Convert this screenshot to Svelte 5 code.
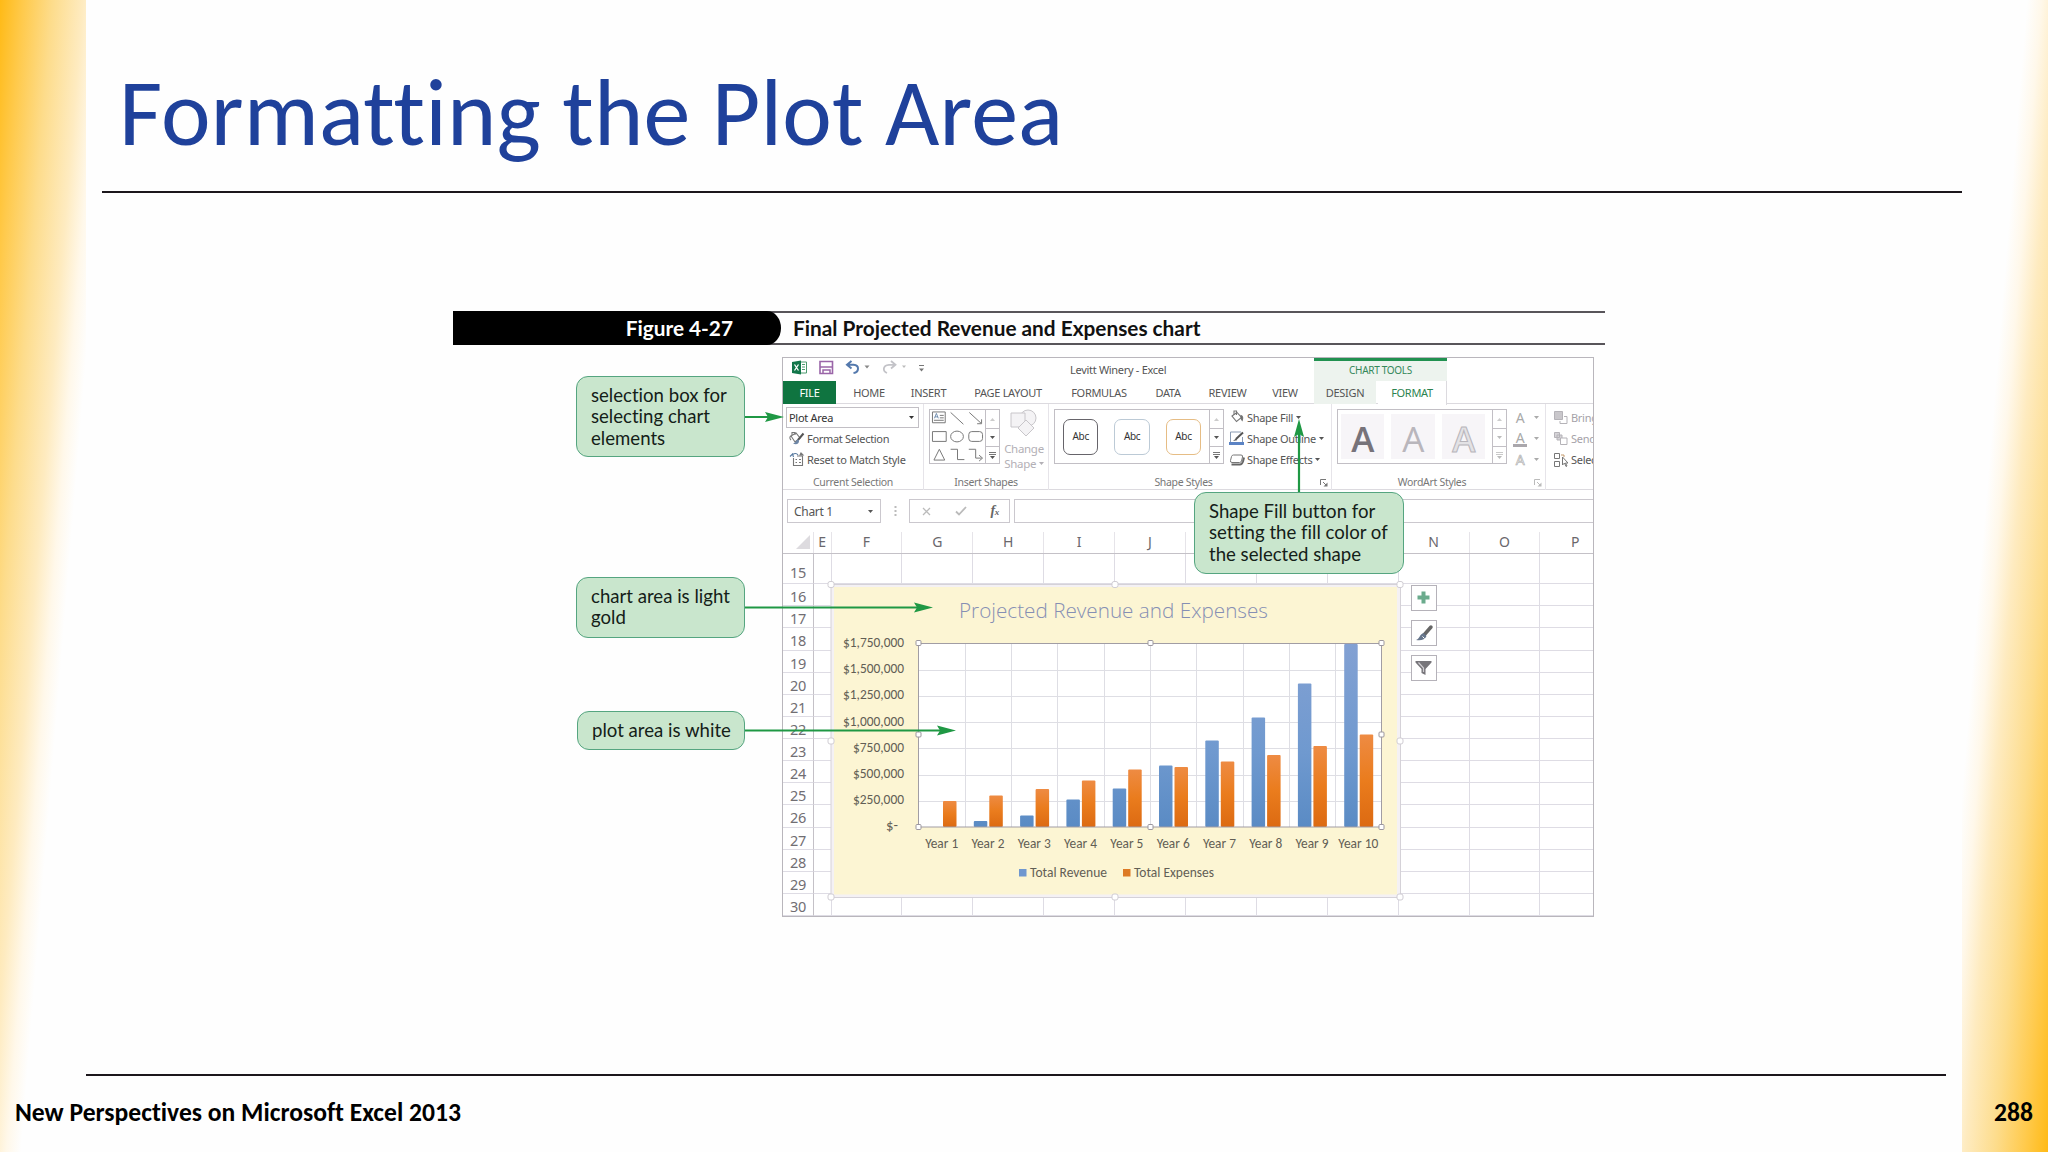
<script lang="ts">
	const tabs = ["FILE", "HOME", "INSERT", "PAGE LAYOUT", "FORMULAS", "DATA", "REVIEW", "VIEW", "DESIGN", "FORMAT"]
	// K, L and M sit under the Shape Fill callout
	const columns = ["E", "F", "G", "H", "I", "J", "", "", "", "N", "O", "P"]
	const rows = Array.from({ length: 16 }, (_, i) => i + 15)
	const axis = ["$1,750,000", "$1,500,000", "$1,250,000", "$1,000,000", "$750,000", "$500,000", "$250,000", "$-"]

	// bar heights in pixels, [revenue, expenses]
	const years = [
		[0, 26], [6, 31.5], [11.5, 38], [27.5, 46.5], [38.5, 57.5],
		[61.5, 60], [86.5, 65.5], [109.5, 72], [143.5, 81], [183, 92.5]
	]

	const plot = { x: 918.5, y: 643.5, w: 463, h: 183.5 }
	const step = plot.w / 10
	const plotHandles = [
		[918.5, 643], [1150.5, 643], [1381.5, 643], [918.5, 734.5],
		[1381.5, 734.5], [918.5, 827], [1150.5, 827], [1381.5, 827]
	]
	const areaHandles = [
		[831, 584.5], [1115, 584.5], [1400, 584.5], [831, 741],
		[1400, 741], [831, 897], [1115, 897], [1400, 897]
	]
</script>

{#snippet caret()}
	<svg class="caret" width="5" height="3" viewBox="0 0 5 3"><path d="M0 0h5L2.500 3z" fill="currentColor" /></svg>
{/snippet}

{#snippet scroller()}
	<div class="scroller">
		<span class="dim"><svg width="5" height="3" viewBox="0 0 5 3"><path d="M0 3h5L2.500 0z" fill="currentColor" /></svg></span>
		<span>{@render caret()}</span>
		<span><svg width="7" height="7" viewBox="0 0 7 7"><path d="M0 .5h7M0 2.500h7" stroke="currentColor" stroke-width=".8" /><path d="M1 4h5L3.500 7z" fill="currentColor" /></svg></span>
	</div>
{/snippet}

{#snippet launcher()}
	<svg class="launcher" width="8" height="8" viewBox="0 0 8 8"><path d="M.5 6V.5H6M3 3l3 3" fill="none" stroke="currentColor" /><path d="M7.500 3.500v4h-4z" fill="currentColor" /></svg>
{/snippet}

<main>
	<div class="band left"></div>
	<div class="band right"></div>
	<header><h1>Formatting the Plot Area</h1></header>

	<section class="figure">
		<div class="caption">
			<div class="number"><span>Figure 4-27</span></div>
			<h2>Final Projected Revenue and Expenses chart</h2>
		</div>

		<div class="window">
			<div class="titlebar">
				<svg width="140" height="20" viewBox="788 359 140 20" fill="none">
					<path d="M800 363h6.500v11H800z" fill="#fff" stroke="#4c9b6f" />
					<path d="M802 365.500h3M802 368h3M802 370.500h3" stroke="#4c9b6f" />
					<path d="M792 363l9-1.500v14l-9-1.500z" fill="#12764a" />
					<path d="M794.500 365.500l4 6M798.500 365.500l-4 6" stroke="#fff" stroke-width="1.300" />
					<path d="M820 362.500h12.500v12H820z" stroke="#9a65a8" stroke-width="1.600" />
					<path d="M820 368h12.500M823 375v-4h7v4" stroke="#9a65a8" stroke-width="1.500" />
					<path d="M851.500 362l-4.500 3.800 4.500 3.700M847.500 365.800h6c6.500.500 5.500 7.500 0 8.200" stroke="#5479ad" stroke-width="2" />
					<path d="M864.500 366.500h5l-2.500 3z" fill="#888" />
					<path d="M891 362l4.500 3.800-4.500 3.700M895 365.800h-6c-6.500.500-6.500 6.500-2 8.200" stroke="#c3c3c8" stroke-width="1.800" />
					<path d="M902 366.500h4l-2 2.500z" fill="#bbb" />
					<path d="M919 366.500h5" stroke="#777" /><path d="M919 369.500h5l-2.500 3z" fill="#777" />
				</svg>
				<span class="doc">Levitt Winery - Excel</span>
				<span class="tools">CHART TOOLS</span>
			</div>
			<nav>
				{#each tabs as tab}
					<span class={tab.toLowerCase().replace(" ", "-")}>{tab}</span>
				{/each}
			</nav>

			<div class="ribbon">
				<div class="group selection">
					<div class="body">
						<div class="select"><span>Plot Area</span>{@render caret()}</div>
						<div class="command">
							<svg width="16" height="15" viewBox="0 0 16 15" fill="none" stroke="#777" stroke-width="1.100"><path d="M2 5l5-3 4 5-5 4z" /><path d="M3 4V1.500h3V4M2 5c-2 1-1 3 0 4" /><path d="M14.500 2.500L9 9" stroke="#555" stroke-width="2" /><path d="M9 8.500c-2 0-1.500 3-5 4 3 1.500 6.500.500 6-3z" fill="#6d86a6" stroke="none" /></svg>
							<span>Format Selection</span>
						</div>
						<div class="command">
							<svg width="16" height="15" viewBox="0 0 16 15" fill="none" stroke="#777" stroke-width="1.100"><path d="M4.500 6v7.500h9V4H8" /><path d="M1 4.500L3.500 2l1 3M3.500 2.500C6 1 8 1.500 9 3" stroke="#57799f" /><path d="M6.500 7.500h1.500M10 7.500h2M6.500 10.500h1.500M10 10.500h2" /><path d="M11 3l1-2 2 2z" fill="#777" /></svg>
							<span>Reset to Match Style</span>
						</div>
					</div>
					<footer>Current Selection</footer>
				</div>

				<div class="group shapes">
					<div class="body">
						<div class="gallery">
							<svg width="56" height="53" viewBox="930 411 56 53" fill="none" stroke="#777">
								<path d="M932.500 412.500h13v11h-13zM940 416h4M940 418.500h4M934 421h10" /><path d="M934.500 419l2-5 2 5M935 417.500h3" stroke="#57799f" stroke-width=".8" />
								<path d="M951 413l13 12M970 413l12 11M982.500 420v4.500h-4.500" />
								<path d="M932.500 432.500h14v10h-14z" /><ellipse cx="957.500" cy="437.500" rx="6.500" ry="5.500" /><rect x="969.500" y="432.500" width="14" height="10" rx="3" />
								<path d="M939.500 450.500l5.500 11h-11zM951 450.500h7v10.500h7M969.500 450.500h7v9h6M980 456.500l3.500 3-3.500 3" />
							</svg>
							{@render scroller()}
						</div>
						<div class="change">
							<svg width="28" height="28" viewBox="0 0 28 28" stroke="#c8c6ca" fill="#f4f3f5"><circle cx="18" cy="9" r="8" /><path d="M1 4h14v14H1z" /><path d="M16 11l8 8-8 8-8-8z" /></svg>
							<span>Change</span>
							<span>Shape {@render caret()}</span>
						</div>
					</div>
					<footer>Insert Shapes</footer>
				</div>

				<div class="group styles">
					<div class="body">
						<div class="gallery">
							<span class="abc">Abc</span><span class="abc blue">Abc</span><span class="abc gold">Abc</span>
							{@render scroller()}
						</div>
						<div class="stack">
							<div class="command">
								<svg width="16" height="15" viewBox="0 0 16 15" fill="none" stroke="#777" stroke-width="1.100"><path d="M3 6l5-3.500 4.500 5-5 4z" /><path d="M5 5V1h2.500v4" /><path d="M12 5.500c2 .5 2 3 1.200 5-.8-1-1.500-2-1.200-5z" fill="#555" /></svg>
								<span>Shape Fill</span>{@render caret()}
							</div>
							<div class="command">
								<svg width="16" height="15" viewBox="0 0 16 15" fill="none"><path d="M12 1H1.500v10M13.500 6v5" stroke="#8a9bb3" /><path d="M14 1.500L7 8" stroke="#555" stroke-width="2" /><path d="M7.500 7L4 10l4-.7z" fill="#555" /><path d="M0 12.500h15" stroke="#5b83c4" stroke-width="3" /></svg>
								<span>Shape Outline</span>{@render caret()}
							</div>
							<div class="command">
								<svg width="16" height="15" viewBox="0 0 16 15" fill="none" stroke="#777"><path d="M4.500 3h7.500q2 0 1.500 2l-1 4q-.5 1.500-2 1.500H3q-2 0-1.500-2l1-4Q3 3 4.500 3z" /><path d="M2.500 12.500h8.500q2 0 3-3l1-4" stroke="#666" stroke-width="2" /></svg>
								<span>Shape Effects</span>{@render caret()}
							</div>
						</div>
					</div>
					<footer>Shape Styles{@render launcher()}</footer>
				</div>

				<div class="group wordart">
					<div class="body">
						<div class="gallery">
							<b>A</b><b class="light">A</b><b class="hollow">A</b>
							{@render scroller()}
						</div>
						<div class="stack">
							<div class="effect"><i>A</i>{@render caret()}</div>
							<div class="effect"><i class="under">A</i>{@render caret()}</div>
							<div class="effect"><i class="outline">A</i>{@render caret()}</div>
						</div>
					</div>
					<footer>WordArt Styles{@render launcher()}</footer>
				</div>

				<div class="group arrange">
					<div class="body">
						<div class="command dim">
							<svg width="14" height="14" viewBox="0 0 14 14" fill="none" stroke="#b5b3b8"><path d="M.5.5h8v8h-8z" fill="#c9c7cb" /><path d="M10 5.500h3v7H6V10" /></svg><span>Bring</span>
						</div>
						<div class="command dim">
							<svg width="14" height="14" viewBox="0 0 14 14" fill="none" stroke="#b5b3b8"><path d="M.5.5h5v5h-5zM3 3h5v5H3z" fill="#d5d3d7" /><path d="M6.500 6h6.500v6.500H6.500z" fill="#fff" /></svg><span>Send</span>
						</div>
						<div class="command">
							<svg width="14" height="14" viewBox="0 0 14 14" fill="none" stroke="#777"><path d="M.5.5h5v5h-5zM.5 8.500h5v5h-5z" /><path d="M7 2h3v2" stroke="#c49a6c" /><path d="M8.500 4v8l2-2 1.500 3.500 1-.5-1.500-3H14z" fill="#fff" /></svg><span>Select</span>
						</div>
					</div>
				</div>
			</div>

			<div class="formula">
				<div class="namebox"><span>Chart 1</span>{@render caret()}</div>
				<svg class="dots" width="3" height="11" viewBox="0 0 3 11"><path d="M.5 0h2v2h-2zM.5 4h2v2h-2zM.5 8h2v2h-2z" fill="#bbb" /></svg>
				<div class="buttons">
					<svg width="9" height="9" viewBox="0 0 9 9" fill="none" stroke="#bbb" stroke-width="1.300"><path d="M1 1l7 7M8 1L1 8" /></svg>
					<svg width="12" height="10" viewBox="0 0 12 10" fill="none" stroke="#bbb" stroke-width="1.800"><path d="M1 5.500L4 8.500 11 1" /></svg>
					<em>f<small>x</small></em>
				</div>
				<div class="input"></div>
			</div>

			<div class="columns">
				<span class="corner"><svg width="14" height="14" viewBox="0 0 14 14"><path d="M14 0v14H0z" fill="#dddbdf" /></svg></span>
				{#each columns as column}<span>{column}</span>{/each}
			</div>
			<div class="sheet">
				{#each rows as row}
					<div class="row">
						<span class="head">{row}</span>
						{#each columns as _}<span></span>{/each}
					</div>
				{/each}
			</div>
		</div>

		<svg class="overlay" viewBox="453 312 1152 608" width="1152" height="608">
			<defs>
				<linearGradient id="revenue" gradientUnits="userSpaceOnUse" x1="0" x2="0" y1="643" y2="827">
					<stop offset="0" stop-color="#83a1d3" /><stop offset=".6" stop-color="#6f99cf" /><stop offset="1" stop-color="#5a8bc4" />
				</linearGradient>
				<linearGradient id="expenses" x1="0" x2="0" y1="0" y2="1">
					<stop offset="0" stop-color="#ee8b43" /><stop offset=".5" stop-color="#ea7c1d" /><stop offset="1" stop-color="#dc6a12" />
				</linearGradient>
			</defs>
			<rect x="831" y="584.500" width="569.500" height="313" fill="#f4f1f4" stroke="#d5d2d8" />
			<rect x="834" y="587" width="563" height="307.500" fill="#fcf5d3" />
			<g fill="#fff" stroke="#d0cdd3">
				{#each areaHandles as [x, y]}<rect x={x - 3} y={y - 3} width="6" height="6" rx="2" />{/each}
			</g>
			<text class="chart-title" x="1113.500" y="618" textLength="309" lengthAdjust="spacingAndGlyphs" text-anchor="middle">Projected Revenue and Expenses</text>
			<rect x={plot.x} y={plot.y} width={plot.w} height={plot.h} fill="#fff" />
			<g stroke="#dedee4">
				{#each [1, 2, 3, 4, 5, 6] as i}<path d="M{plot.x} {Math.round(plot.y + i * 26.2) + .5}h{plot.w}" />{/each}
				{#each [1, 2, 3, 4, 5, 6, 7, 8, 9] as i}<path d="M{Math.round(plot.x + i * step) + .5} {plot.y}v{plot.h}" />{/each}
			</g>
			{#each years as [revenue, expenses], i}
				<rect x={plot.x + i * step + 9} y={827 - revenue} width="13.500" height={revenue} rx="1" fill="url(#revenue)" />
				<rect x={plot.x + i * step + 24.5} y={827 - expenses} width="13.500" height={expenses} rx="1" fill="url(#expenses)" />
				<text class="tick" x={plot.x + (i + .5) * step} y="847.500" textLength={i === 9 ? 40 : 33} lengthAdjust="spacingAndGlyphs" text-anchor="middle">Year {i + 1}</text>
			{/each}
			<rect x={plot.x} y={plot.y} width={plot.w} height={plot.h} fill="none" stroke="#a19da4" />
			<g fill="#fff" stroke="#9b979e">
				{#each plotHandles as [x, y]}<rect x={x - 2.5} y={y - 2.5} width="5" height="5" rx="1" />{/each}
			</g>
			{#each axis as label, i}
				<text class="tick" x={i === 7 ? 898 : 904} y={647 + i * 26.2} textLength={i === 7 ? 12 : i > 3 ? 51 : 61} lengthAdjust="spacingAndGlyphs" text-anchor="end">{label}</text>
			{/each}
			<rect x="1019" y="869" width="7.500" height="7.500" fill="#6f97cf" />
			<text class="tick" x="1030" y="877" textLength="77" lengthAdjust="spacingAndGlyphs">Total Revenue</text>
			<rect x="1123" y="869" width="7.500" height="7.500" fill="#dd7a24" />
			<text class="tick" x="1134" y="877" textLength="80" lengthAdjust="spacingAndGlyphs">Total Expenses</text>

			<g fill="#fff" stroke="#b5b2b9">
				<rect x="1411.500" y="585.500" width="25" height="25" /><rect x="1411.500" y="620.500" width="25" height="25" /><rect x="1411.500" y="655.500" width="25" height="25" />
			</g>
			<path d="M1423.500 591.500v12M1417.500 597.500h12" stroke="#6bab8d" stroke-width="4" />
			<path d="M1431 627l-7 8" stroke="#666" stroke-width="3.500" stroke-linecap="round" /><path d="M1423.500 633l3 3c-1.500 4-6 5-10.500 4 3.500-1 3.500-5.500 7.500-7z" fill="#66758b" /><path d="M1422.500 636.500l2 2" stroke="#fff" />
			<path d="M1415.500 661h16v1.500l-6 6.500v6l-4-2v-4l-6-6.500z" fill="#77757a" /><path d="M1418.500 662.500l5 5.500v4" stroke="#d0ced2" fill="none" stroke-width="1.200" />

			<g stroke="#1f9844" stroke-width="2.200" fill="#1f9844">
				<path d="M744 417h24M744 607.500h174M744 730.500h196M1299 493v-60" />
				<path d="M784 417l-19-5 3 5-3 5zM933 607.500l-19-5 3 5-3 5zM956 730.500l-19-5 3 5-3 5zM1299 419l-5 18 5-3 5 3z" stroke="none" />
			</g>
		</svg>

		<p class="callout one">selection box for<br>selecting chart<br>elements</p>
		<p class="callout two">chart area is light<br>gold</p>
		<p class="callout three">plot area is white</p>
		<p class="callout four">Shape Fill button for<br>setting the fill color of<br>the selected shape</p>
	</section>

	<div class="bottom">
		<span>New Perspectives on Microsoft Excel 2013</span>
		<span>288</span>
	</div>
</main>

<style>
	:global(body) {
		margin: 0;
		background: #fefefe;
	}
	main {
		position: relative;
		display: flex;
		flex-direction: column;
		width: 2048px;
		height: 1152px;
		overflow: hidden;
		font-family: Carlito, Lato, sans-serif;
		font-variant-ligatures: none;
	}
	.band {
		position: absolute;
		top: 0;
		width: 86px;
		height: 1152px;
	}
	.band.left {
		left: 0;
		background: linear-gradient(94.7deg, #ffba16 0%, #ffca4c 13%, #fddc8b 29%, #feebc0 46%, #fff8ea 56%, #fefefe 64%);
	}
	.band.right {
		right: 0;
		background: linear-gradient(274.7deg, #ffba16 0%, #ffca4c 13%, #fddc8b 29%, #feebc0 46%, #fff8ea 56%, #fefefe 64%);
	}
	header {
		position: relative;
		box-sizing: border-box;
		height: 193px;
		margin: 0 86px 0 102px;
		padding: 57px 0 0 17px;
		border-bottom: 2px solid #1c171c;
	}
	h1 {
		margin: 0;
		font-size: 94px;
		font-weight: 400;
		line-height: 112px;
		letter-spacing: .15px;
		color: #1f419b;
		white-space: nowrap;
	}
	.figure {
		position: relative;
		width: 1152px;
		height: 608px;
		margin: 118px 0 0 453px;
	}
	.caption {
		display: flex;
		box-sizing: border-box;
		height: 34px;
		border-top: 2px solid #58555a;
		border-bottom: 2px solid #58555a;
		font-family: Lato, sans-serif;
		font-size: 20.8px;
		font-weight: 700;
		line-height: 30px;
	}
	.number {
		width: 280px;
		margin: -2px 0;
		padding: 2px 48px 2px 0;
		text-align: right;
		color: #fff;
		background: #000;
		border-radius: 0 14px 14px 0 / 0 17px 17px 0;
	}
	h2 {
		margin: 0 0 0 12px;
		font-size: inherit;
		color: #111;
		white-space: nowrap;
	}
	.window {
		display: flex;
		flex-direction: column;
		box-sizing: border-box;
		width: 812px;
		height: 560px;
		margin: 12px 0 0 329px;
		border: 1px solid #b9b6bc;
		overflow: hidden;
		background: #fff;
		font-family: "Noto Sans", sans-serif;
		font-size: 11px;
		letter-spacing: -.3px;
		color: #555;
	}
	.titlebar {
		display: grid;
		grid-template-columns: 5px 282px 98px 146px 133px;
		height: 23px;
		white-space: nowrap;
	}
	.titlebar svg {
		grid-column: 2;
	}
	.doc {
		line-height: 23px;
	}
	.tools {
		grid-column: 5;
		text-align: center;
		line-height: 19px;
		border-top: 3px solid #219150;
		background: #edf3ee;
		font-size: 10px;
		color: #35885a;
	}
	nav {
		display: grid;
		grid-template-columns: 53px 66px 53px 106px 76px 62px 57px 58px 62px 71px 1fr;
		height: 22px;
		line-height: 23px;
		text-align: center;
		border-bottom: 1px solid #dcdadf;
		white-space: nowrap;
	}
	.file {
		color: #fff;
		background: #0f7440;
	}
	.design {
		background: #edf3ee;
	}
	.format {
		margin: 0 0 -1px 2px;
		background: #fff;
		color: #2c8350;
		border-right: 1px solid #dcdadf;
	}
	.ribbon {
		display: grid;
		grid-template-columns: 141px 125px 283px 214px 80px;
		height: 85px;
		border-bottom: 1px solid #dcdadf;
	}
	.group {
		position: relative;
		display: flex;
		flex-direction: column;
		box-sizing: border-box;
		border-right: 1px solid #e6e4e9;
		white-space: nowrap;
	}
	.body {
		display: flex;
		height: 70px;
	}
	.group footer {
		text-align: center;
		line-height: 16px;
		font-size: 10.5px;
		color: #777;
	}
	.styles footer, .wordart footer {
		padding-right: 13px;
	}
	.selection .body, .arrange .body, .stack {
		flex-direction: column;
	}
	.select {
		display: flex;
		align-items: center;
		justify-content: space-between;
		box-sizing: border-box;
		width: 133px;
		height: 21px;
		margin: 3px 0 0 3px;
		padding: 0 4px 0 2px;
		border: 1px solid #c2bfc5;
		color: #333;
	}
	.command {
		display: flex;
		align-items: center;
		height: 21px;
	}
	.selection .command svg {
		margin: 0 2px 0 6px;
	}
	.gallery {
		display: flex;
		box-sizing: border-box;
		height: 55px;
		margin-top: 5px;
		border: 1px solid #c2bfc5;
	}
	.scroller {
		display: grid;
		grid-template-rows: 18px 18px 17px;
		width: 13px;
		margin-left: auto;
		border-left: 1px solid #c2bfc5;
	}
	.scroller span {
		display: flex;
		align-items: center;
		justify-content: center;
	}
	.scroller span + span {
		border-top: 1px solid #c2bfc5;
	}
	.scroller .dim {
		color: #ccc;
	}
	.shapes .gallery {
		width: 71px;
		margin-left: 5px;
	}
	.shapes .scroller {
		flex: none;
	}
	.change {
		display: flex;
		flex-direction: column;
		align-items: center;
		width: 49px;
		padding-top: 5px;
		line-height: 15px;
		font-size: 11.5px;
		color: #b3b0b6;
	}
	.change svg:first-child {
		margin-bottom: 4px;
	}
	.change span .caret {
		margin-bottom: 3px;
	}
	.styles .gallery, .wordart .gallery {
		width: 170px;
		margin-left: 5px;
	}
	.abc {
		box-sizing: border-box;
		width: 36px;
		height: 36px;
		margin: 9px 8px 0;
		border: 1.500px solid #66646a;
		border-radius: 7px;
		text-align: center;
		line-height: 32px;
		font-size: 10px;
		color: #333;
	}
	.abc.blue {
		border-color: #bccad6;
	}
	.abc.gold {
		border-color: #e6bd85;
	}
	.stack {
		display: flex;
		padding: 3px 0 0 5px;
	}
	.stack .command svg:first-child {
		margin-right: 2px;
	}
	.stack .caret {
		margin-left: 3px;
	}
	.launcher {
		position: absolute;
		right: 3px;
		bottom: 3px;
	}
	.wordart .gallery {
		gap: 7px;
	}
	.wordart b {
		width: 45px;
		height: 45px;
		margin-top: 4px;
		background: #f7f5f8;
		text-align: center;
		font: 600 35px/49px "Open Sans", sans-serif;
		color: #77737a;
	}
	.wordart b:first-child {
		margin-left: 3px;
	}
	.wordart b.light {
		font-weight: 400;
		color: #b9b6bc;
	}
	.wordart b.hollow {
		color: #e3e2e5;
		-webkit-text-stroke: 1px #b8b5bb;
	}
	.wordart .scroller, .wordart .launcher {
		color: #bbb;
	}
	.effect {
		display: flex;
		align-items: center;
		justify-content: space-between;
		width: 26px;
		height: 21px;
		color: #aaa;
	}
	.effect i {
		width: 14px;
		text-align: center;
		font-style: normal;
		font-size: 14px;
		line-height: 15px;
	}
	.effect .under {
		line-height: 13px;
		border-bottom: 3px solid #aaa7ac;
	}
	.effect .outline {
		color: #eee;
		-webkit-text-stroke: .6px #aaa;
	}
	.wordart .stack {
		padding-left: 6px;
	}
	.arrange .body {
		padding-top: 3px;
	}
	.arrange svg {
		flex: none;
		margin: 0 3px 0 8px;
	}
	.command.dim {
		color: #a5a2a8;
	}
	.formula {
		display: flex;
		align-items: center;
		height: 44px;
		font-size: 12px;
	}
	.namebox, .buttons, .input {
		display: flex;
		align-items: center;
		box-sizing: border-box;
		height: 24px;
		border: 1px solid #cbc8ce;
	}
	.namebox {
		justify-content: space-between;
		width: 94px;
		margin-left: 4px;
		padding: 0 7px 0 6px;
	}
	.dots {
		margin: 0 12px 0 13px;
	}
	.buttons {
		justify-content: space-between;
		width: 101px;
		padding: 0 10px 0 12px;
	}
	.buttons em {
		font: italic 700 14px "Liberation Serif", serif;
		color: #666;
	}
	.buttons small {
		font-size: 9px;
	}
	.input {
		flex: 1;
		margin-left: 4px;
		border-right: 0;
	}
	.columns, .row {
		display: grid;
		grid-template-columns: 31px 17.5px repeat(11, 70.9px);
	}
	.columns {
		height: 21px;
		line-height: 19px;
		border-bottom: 1px solid #c4c1c7;
		text-align: center;
		font-size: 14px;
		letter-spacing: 0;
		color: #6a676c;
	}
	.columns span {
		border-right: 1px solid #e6e4e9;
	}
	.columns .corner {
		display: flex;
		justify-content: flex-end;
		padding: 3px 3px 0 0;
	}
	.sheet {
		display: grid;
		grid-template-rows: 30.5px repeat(15, 22.13px);
	}
	.row span {
		border-right: 1px solid #dedce4;
		border-bottom: 1px solid #dedce4;
	}
	.row .head {
		display: flex;
		align-items: center;
		padding: 3px 0 0 7px;
		border-right-color: #c4c1c7;
		font-size: 14.5px;
		letter-spacing: -.2px;
		line-height: 18px;
		color: #716e73;
	}
	.row:first-child .head {
		padding-top: 8px;
	}
	.overlay {
		position: absolute;
		top: 1px;
		left: 0;
	}
	.chart-title {
		font-family: "Open Sans", sans-serif;
		font-size: 21px;
		font-weight: 300;
		fill: #868fb3;
	}
	.tick {
		font-family: Carlito, Lato, sans-serif;
		font-size: 13.4px;
		fill: #625e55;
	}
	.callout {
		position: absolute;
		box-sizing: border-box;
		margin: 0;
		padding: 8px 0 0 14px;
		border: 1.500px solid #55a580;
		border-radius: 12px;
		background: #c9e6cd;
		font: 18.6px/21.300px Lato, sans-serif;
		font-variant-ligatures: none;
		color: #142018;
		white-space: nowrap;
	}
	.one {
		left: 123px;
		top: 65px;
		width: 169px;
		height: 81px;
	}
	.two {
		left: 123px;
		top: 266px;
		width: 169px;
		height: 61px;
	}
	.three {
		left: 124px;
		top: 400px;
		width: 168px;
		height: 39px;
	}
	.four {
		left: 741px;
		top: 181px;
		width: 210px;
		height: 82px;
	}
	.bottom {
		position: relative;
		display: flex;
		justify-content: space-between;
		margin-top: 155px;
		padding: 24px 15px 0;
		font-size: 25.6px;
		font-weight: 700;
		line-height: 30px;
		color: #000;
	}
	.bottom::before {
		content: "";
		position: absolute;
		top: 0;
		left: 86px;
		width: 1860px;
		height: 2px;
		background: #1c171c;
	}
</style>
